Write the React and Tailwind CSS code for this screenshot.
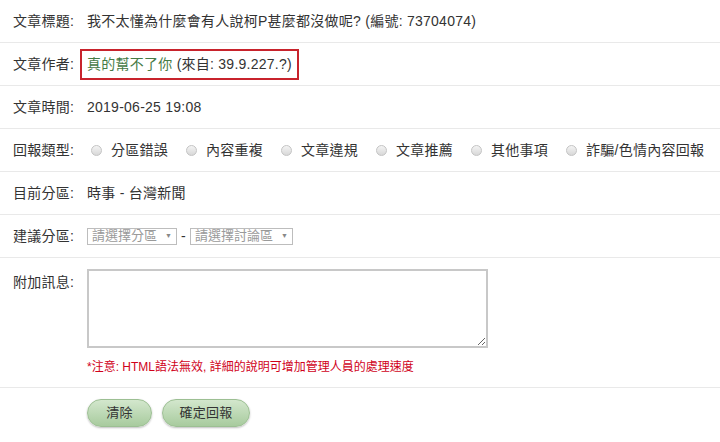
import { useState } from "react";

const font = { fontFamily: '"Liberation Sans", "Noto Sans CJK TC", sans-serif' };

const Row = ({ label, children, className = "" }) => (
  <div className={"flex items-center h-[43px] border-b border-[#e9e9e9] " + className}>
    <div className="w-[87px] pl-[13px] shrink-0 whitespace-nowrap">{label}</div>
    <div className="flex items-center whitespace-nowrap">{children}</div>
  </div>
);

const Radio = ({ text, checked, onClick }) => (
  <label className="flex items-center shrink-0 whitespace-nowrap mr-[14px] cursor-pointer" onClick={onClick}>
    <span className="w-[11px] h-[11px] rounded-full border border-[#c4c4c4] bg-gradient-to-b from-[#f4f4f4] to-[#d8d8d8] mr-[9px] ml-[4px] flex items-center justify-center">
      {checked && <span className="w-[5px] h-[5px] rounded-full bg-[#555]" />}
    </span>
    {text}
  </label>
);

const Select = ({ text }) => (
  <div className="flex items-center h-[17px] border border-[#bdbdbd] px-[4px] text-[13px] tracking-normal text-[#9a9a9a] bg-white">
    <span>{text}</span>
    <span className="text-[7px] ml-[8px] text-[#888]">▼</span>
  </div>
);

export default function App() {
  const [type, setType] = useState(null); // 回報類型
  const types = ["分區錯誤", "內容重複", "文章違規", "文章推薦", "其他事項", "詐騙/色情內容回報"];

  return (
    <div className="w-[720px] h-[442px] bg-white text-[14px] tracking-[0.25px] text-[#333] overflow-hidden" style={font}>
      <Row label="文章標題:">我不太懂為什麼會有人說柯P甚麼都沒做呢? (編號: 73704074)</Row>
      <Row label="文章作者:">
        <span className="-ml-[7px] border-2 border-[#c8232c] h-[31px] px-[5px] flex items-center">
          <span className="text-[#457a45]">真的幫不了你</span>&nbsp;(來自: 39.9.227.?)
        </span>
      </Row>
      <Row label="文章時間:">2019-06-25 19:08</Row>
      <Row label="回報類型:">
        <div className="flex items-center">
          {types.map((t, i) => (
            <Radio key={i} text={t} checked={type === i} onClick={() => setType(i)} />
          ))}
        </div>
      </Row>
      <Row label="目前分區:">時事 - 台灣新聞</Row>
      <Row label="建議分區:">
        <Select text="請選擇分區" />
        <span className="mx-[4px]">-</span>
        <Select text="請選擇討論區" />
      </Row>

      {/* 附加訊息 */}
      <div className="flex border-b border-[#e9e9e9] h-[130px]">
        <div className="w-[87px] pl-[13px] shrink-0 pt-[14px]">附加訊息:</div>
        <div className="pt-[11px]">
          <textarea className="block w-[401px] h-[79px] border-2 border-[#c8c8c8] resize-y outline-none" />
          <div className="text-[12px] tracking-normal text-[#d0021b] mt-[10px]">*注意: HTML語法無效, 詳細的說明可增加管理人員的處理速度</div>
        </div>
      </div>

      <div className="flex pl-[87px] pt-[11px] gap-[10px]">
        <button className="w-[65px] h-[28px] rounded-full border border-[#9cbf93] bg-gradient-to-b from-[#d3e7cd] to-[#a8cb9e] text-[13px] text-[#333] shadow-[0_1px_2px_rgba(0,0,0,0.25)]">
          清除
        </button>
        <button className="w-[88px] h-[28px] rounded-full border border-[#9cbf93] bg-gradient-to-b from-[#d3e7cd] to-[#a8cb9e] text-[13px] text-[#333] shadow-[0_1px_2px_rgba(0,0,0,0.25)]">
          確定回報
        </button>
      </div>
    </div>
  );
}
